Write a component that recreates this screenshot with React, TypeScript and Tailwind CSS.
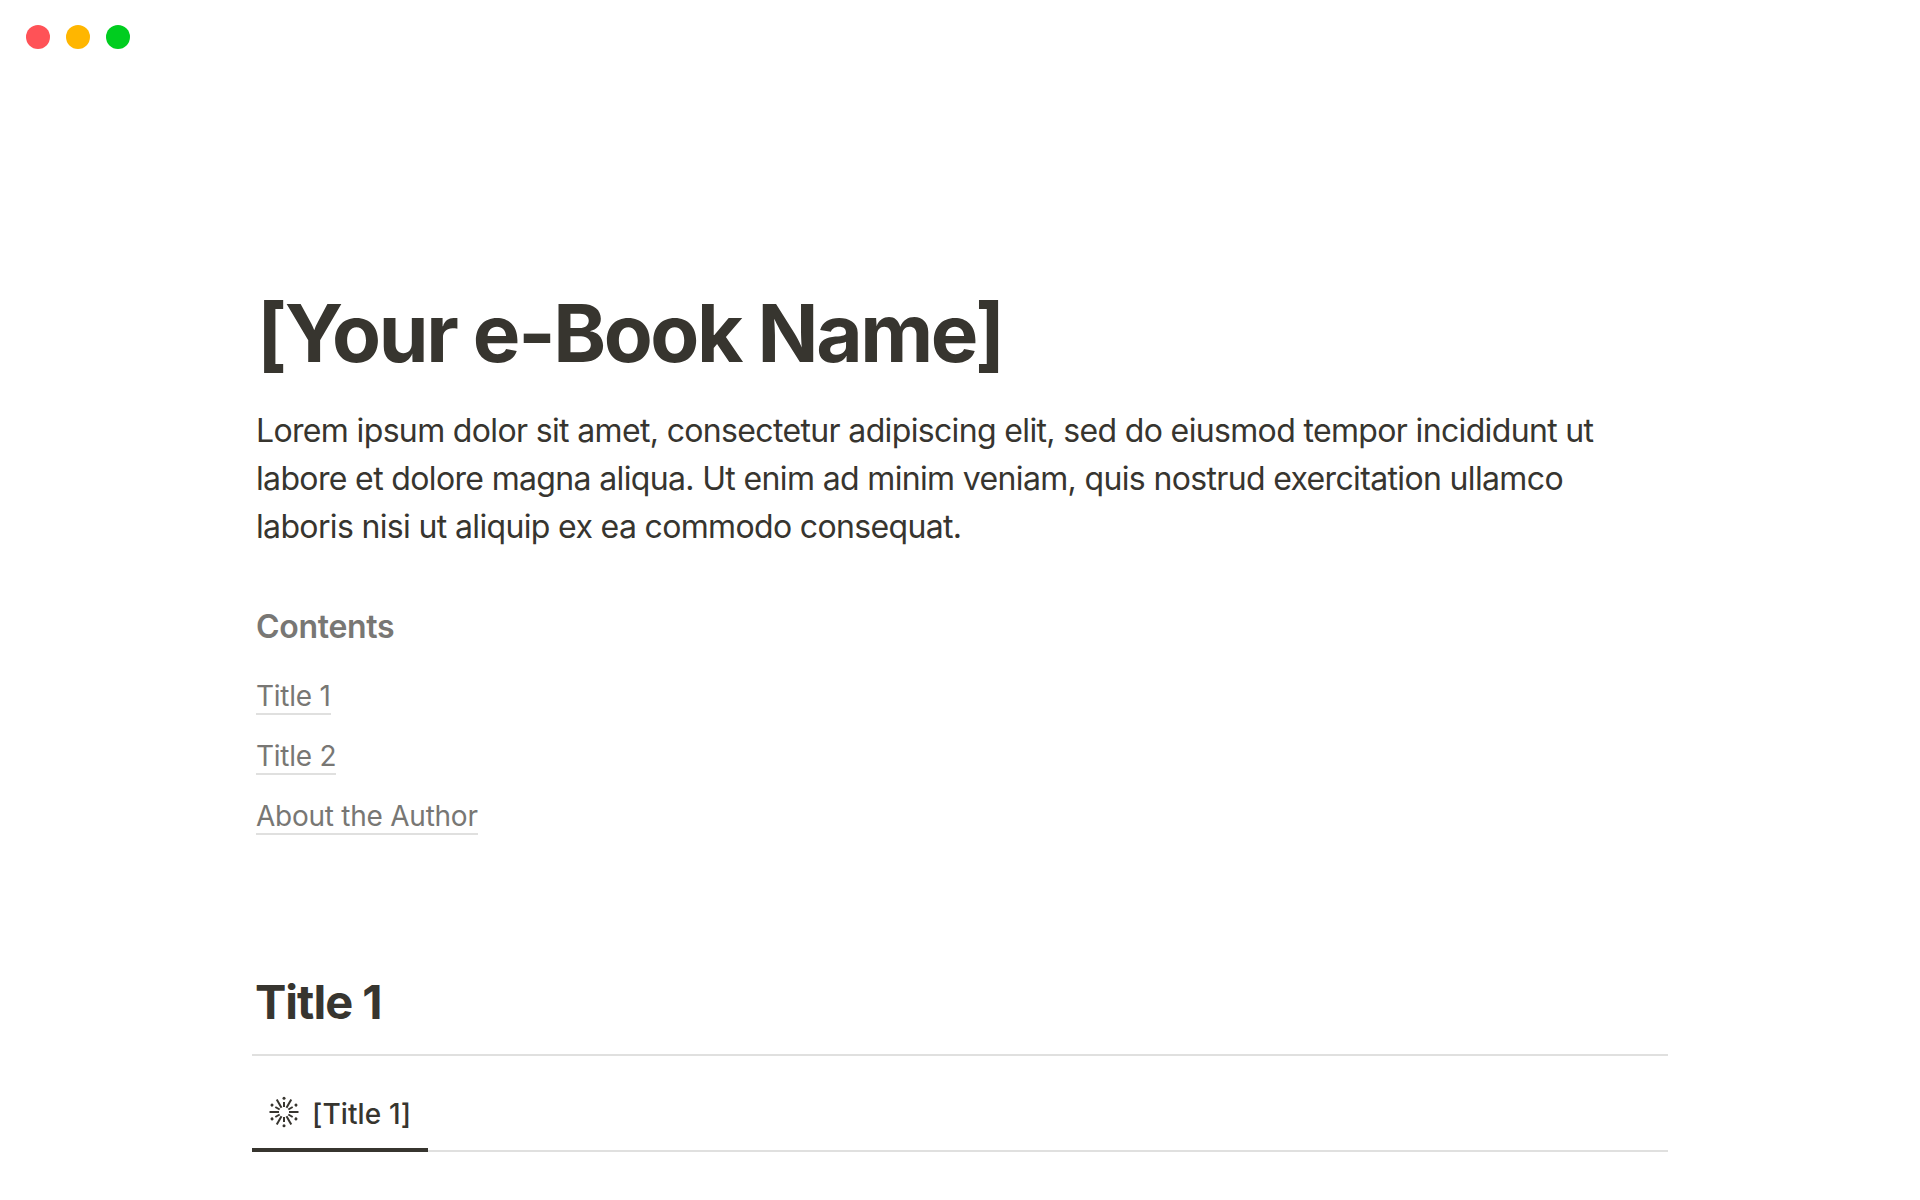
const links = ['Title 1', 'Title 2', 'About the Author'];

// 12 rays: long dashes alternating with a short tick and an outer dot
function SparkIcon() {
  const spokes = Array.from({ length: 12 }, (_, i) => i * 30);
  return (
    <svg width="32" height="32" viewBox="0 0 32 32" className="shrink-0">
      {spokes.map((a, i) => (
        <g key={a} transform={`rotate(${a} 16 16)`}>
          {i % 2 === 0 ? (
            <>
              <line x1="16" y1="11" x2="16" y2="6" stroke="#37352f" strokeWidth="2" />
              <circle cx="16" cy="2.2" r="1.5" fill="#37352f" />
            </>
          ) : (
            <line x1="16" y1="11" x2="16" y2="1.5" stroke="#37352f" strokeWidth="2" />
          )}
        </g>
      ))}
    </svg>
  );
}

export default function App() {
  return (
    <div className="h-[1200px] overflow-hidden bg-white font-['Inter',sans-serif] text-[#37352f]">
      <div className="flex gap-4 pl-[26px] pt-[25px]">
        <span className="h-6 w-6 rounded-full bg-[#ff5257]" />
        <span className="h-6 w-6 rounded-full bg-[#ffb600]" />
        <span className="h-6 w-6 rounded-full bg-[#00cd1f]" />
      </div>

      <main className="w-[1416px] ml-[252px] pt-[238px]">
        <h1 className="pl-[5px] text-[80px] leading-[92px] font-bold tracking-[-2.4px]">[Your e-Book Name]</h1>

        <p className="mt-[28px] w-[1380px] pl-1 text-[32px] leading-[48px] tracking-[-0.65px]">
          Lorem ipsum dolor sit amet, consectetur adipiscing elit, sed do eiusmod tempor incididunt ut labore et dolore magna aliqua. Ut enim ad minim veniam, quis nostrud exercitation ullamco laboris nisi ut aliquip ex ea commodo consequat.
        </p>

        <h3 className="mt-[52px] pl-1 text-[32px] leading-[48px] font-semibold tracking-[-0.3px] text-[#787774]">Contents</h3>

        <ul className="mt-[27px] flex flex-col items-start gap-[23px] pl-1 text-[28px] leading-[38px] tracking-[-0.25px] text-[#787774]">
          {links.map((l) => (
            <li key={l} className="border-b-2 border-[#e0e0df] h-[37px] leading-[36px]">{l}</li>
          ))}
        </ul>

        <h2 className="mt-[137px] pl-[3px] text-[47px] leading-[60px] font-bold tracking-[-1px]">Title 1</h2>

        <div className="mt-[22px] h-0.5 bg-[#e0e0df]" />

        <div className="mt-[39px] border-b-2 border-[#e0e0df]">
          <div className="-mb-0.5 flex h-[57px] w-[176px] items-start gap-[12px] border-b-4 border-[#37352f] pl-[16px] pt-[1px]">
            <SparkIcon />
            <span className="text-[28px] leading-[36px] font-medium tracking-[0.1px]">[Title 1]</span>
          </div>
        </div>
      </main>
    </div>
  );
}
